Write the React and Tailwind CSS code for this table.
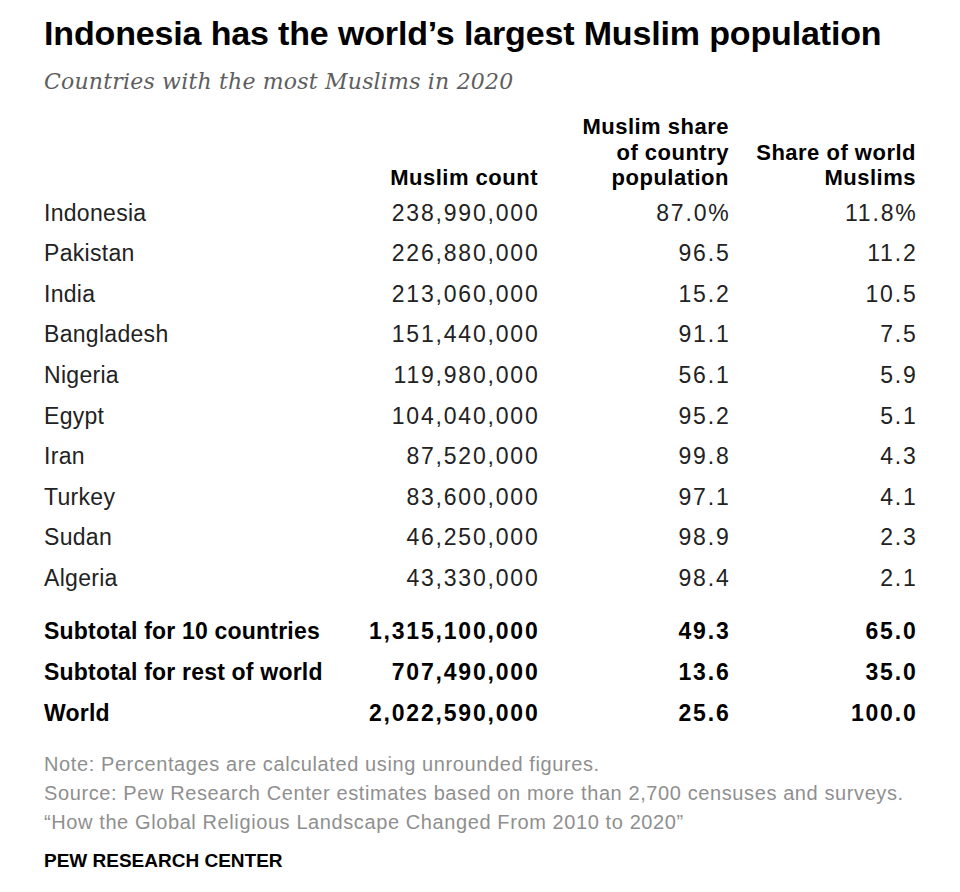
const rows = [
  ["Indonesia", "238,990,000", "87.0%", "11.8%"],
  ["Pakistan", "226,880,000", "96.5", "11.2"],
  ["India", "213,060,000", "15.2", "10.5"],
  ["Bangladesh", "151,440,000", "91.1", "7.5"],
  ["Nigeria", "119,980,000", "56.1", "5.9"],
  ["Egypt", "104,040,000", "95.2", "5.1"],
  ["Iran", "87,520,000", "99.8", "4.3"],
  ["Turkey", "83,600,000", "97.1", "4.1"],
  ["Sudan", "46,250,000", "98.9", "2.3"],
  ["Algeria", "43,330,000", "98.4", "2.1"],
];

const totals = [
  ["Subtotal for 10 countries", "1,315,100,000", "49.3", "65.0"],
  ["Subtotal for rest of world", "707,490,000", "13.6", "35.0"],
  ["World", "2,022,590,000", "25.6", "100.0"],
];

const grid = "grid grid-cols-[294px_200px_191px_187px]";

function Row({ cells, bold }) {
  return (
    <div className={`${grid} h-[40.6px] items-center ${bold ? "font-bold" : ""}`}>
      <div className={bold ? "tracking-[0.2px]" : "tracking-[0.3px]"}>{cells[0]}</div>
      <div className="text-right tracking-[1.8px] -mr-[1.5px]">{cells[1]}</div>
      <div className="text-right tracking-[1.8px] -mr-[1.5px]">{cells[2]}</div>
      <div className="text-right tracking-[1.8px] -mr-[1.5px]">{cells[3]}</div>
    </div>
  );
}

export default function App() {
  return (
    <div className="w-[960px] h-[892px] bg-white pl-[44px] pt-[13px] text-[#222] font-['Liberation_Sans',Arial,sans-serif]">
      {/* TITLE */}
      <h1 className="text-[34px] leading-[40px] font-bold text-black tracking-[-0.15px]">
        Indonesia has the world’s largest Muslim population
      </h1>
      <p className="mt-[14px] text-[22px] leading-[30px] italic text-[#5e5e5e] tracking-[0.2px] font-['DejaVu_Serif',Georgia,serif]">
        Countries with the most Muslims in 2020
      </p>

      {/* HEADER */}
      <div className={`${grid} mt-[17px] items-end font-bold text-[22px] leading-[25.5px] tracking-[0.5px] text-black`}>
        <div />
        <div className="text-right">Muslim count</div>
        <div className="text-right">
          Muslim share
          <br />
          of country
          <br />
          population
        </div>
        <div className="text-right">
          Share of world
          <br />
          Muslims
        </div>
      </div>

      {/* ROWS */}
      <div className="mt-[2px] text-[23px]">
        {rows.map((r) => (
          <Row key={r[0]} cells={r} />
        ))}
      </div>

      <div className="mt-[13px] text-[23px] text-black">
        {totals.map((r) => (
          <Row key={r[0]} cells={r} bold />
        ))}
      </div>

      {/* NOTES */}
      <div className="mt-[17px] text-[20px] leading-[29px] text-[#8f8f8f] tracking-[0.6px]">
        <p>Note: Percentages are calculated using unrounded figures.</p>
        <p>Source: Pew Research Center estimates based on more than 2,700 censuses and surveys.</p>
        <p>“How the Global Religious Landscape Changed From 2010 to 2020”</p>
      </div>

      <p className="mt-[11px] text-[19px] leading-[26px] font-bold text-black">
        PEW RESEARCH CENTER
      </p>
    </div>
  );
}
